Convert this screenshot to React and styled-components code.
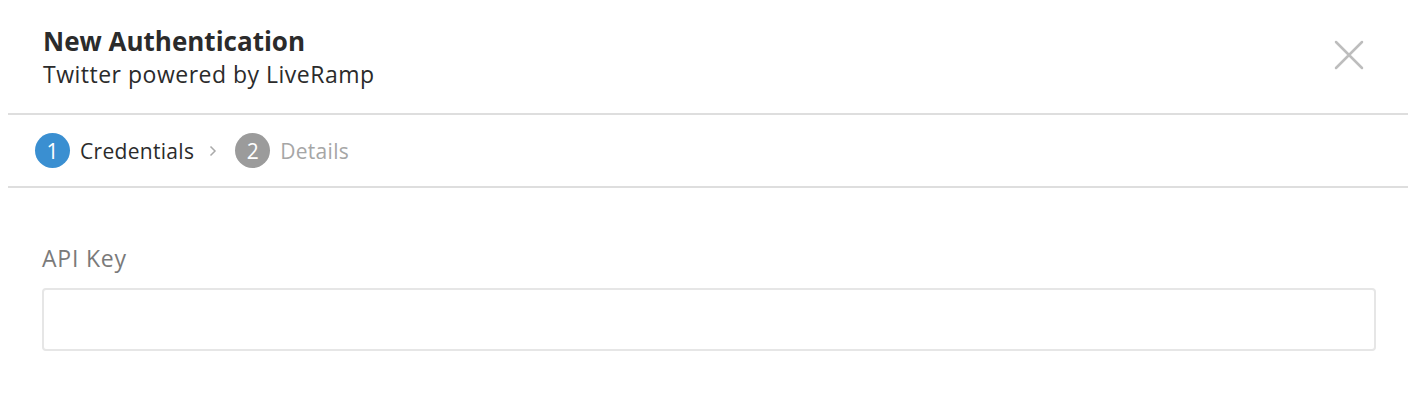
import React from "react";
import styled, { createGlobalStyle } from "styled-components";

const Global = createGlobalStyle`
  body {
    margin: 8px;
    background: #fff;
    font-family: "Open Sans", Lato, sans-serif;
  }
`;

const Modal = styled.div`
  width: 1400px;
  background: #fff;
  color: #2b2b2b;
`;

const Header = styled.div`
  display: flex;
  justify-content: space-between;
  align-items: flex-start;
  padding: 16px 44px 0 35px;
  box-sizing: border-box;
  height: 107px;
  border-bottom: 2px solid #dedede;
`;

const Titles = styled.div`
  display: flex;
  flex-direction: column;
`;

const Title = styled.h1`
  margin: 0;
  font-size: 26px;
  line-height: 34px;
  font-weight: 700;
  color: #2b2b2b;
`;

const Subtitle = styled.div`
  font-size: 23px;
  line-height: 32px;
  letter-spacing: 0.5px;
  color: #2b2b2b;
`;

const CloseButton = styled.button`
  border: none;
  background: none;
  padding: 0;
  margin-top: 16px;
  cursor: pointer;
  display: flex;
`;

const Steps = styled.div`
  display: flex;
  align-items: center;
  height: 71px;
  padding-left: 27px;
  border-bottom: 2px solid #dedede;
`;

const Step = styled.div`
  display: flex;
  align-items: center;
  gap: 10px;
  font-size: 21px;
  letter-spacing: 0.3px;
  color: ${(p) => (p.$active ? "#2b2b2b" : "#a6a6a6")};
`;

const Circle = styled.span`
  width: 35px;
  height: 35px;
  border-radius: 50%;
  background: ${(p) => (p.$active ? "#3a8fd1" : "#9b9b9b")};
  color: #fff;
  display: flex;
  align-items: center;
  justify-content: center;
  font-size: 21px;
  letter-spacing: 0;
`;

const Chevron = styled.span`
  display: flex;
  margin: 0 18px 0 15px;
`;

const Body = styled.div`
  padding: 54px 32px 40px 34px;
`;

const Label = styled.label`
  display: block;
  font-size: 23px;
  letter-spacing: 0.8px;
  color: #7a7a7a;
  margin-bottom: 14px;
`;

const Input = styled.input`
  box-sizing: border-box;
  width: 100%;
  height: 63px;
  border: 2px solid #e6e6e6;
  border-radius: 4px;
  font-size: 20px;
  padding: 0 14px;
  outline: none;
`;

export default function App() {
  return (
    <>
      <Global />
      <Modal>
        <Header>
          <Titles>
            <Title>New Authentication</Title>
            <Subtitle>Twitter powered by LiveRamp</Subtitle>
          </Titles>
          <CloseButton aria-label="Close">
            <svg width="30" height="30" viewBox="0 0 30 30">
              <path d="M2 2 L28 28 M28 2 L2 28" stroke="#bdbdbd" strokeWidth="2.5" strokeLinecap="round" />
            </svg>
          </CloseButton>
        </Header>
        <Steps>
          <Step $active>
            <Circle $active>1</Circle>
            Credentials
          </Step>
          <Chevron>
            <svg width="8" height="12" viewBox="0 0 8 12">
              <path d="M1.5 1.5 L6 6 L1.5 10.5" stroke="#aaa" strokeWidth="1.5" fill="none" />
            </svg>
          </Chevron>
          <Step>
            <Circle>2</Circle>
            Details
          </Step>
        </Steps>
        <Body>
          <Label>API Key</Label>
          <Input type="text" />
        </Body>
      </Modal>
    </>
  );
}
